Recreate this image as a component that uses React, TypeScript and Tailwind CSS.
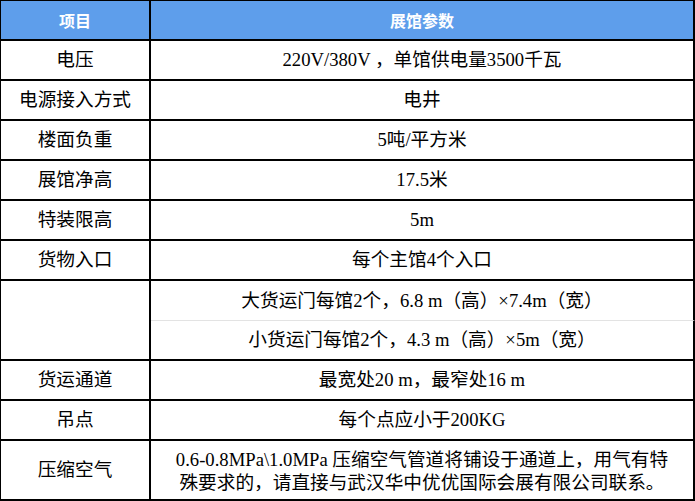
const rows: { label: string; value: string }[] = [
  { label: '电压', value: '220V/380V ，单馆供电量3500千瓦' },
  { label: '电源接入方式', value: '电井' },
  { label: '楼面负重', value: '5吨/平方米' },
  { label: '展馆净高', value: '17.5米' },
  { label: '特装限高', value: '5m' },
  { label: '货物入口', value: '每个主馆4个入口' },
]

const tail: { label: string; value: string }[] = [
  { label: '货运通道', value: '最宽处20 m，最窄处16 m' },
  { label: '吊点', value: '每个点应小于200KG' },
]

const cell =
  'flex items-center justify-center border-r-2 border-b-2 border-black text-center'

export default function App() {
  return (
    <div className="w-[695px] h-[501px] bg-white overflow-hidden">
      <div className="w-[695px] border-t border-l border-black grid grid-cols-[150px_544px] font-['Liberation_Serif','Noto_Sans_CJK_SC',serif] text-[18.67px] text-black">
        {/* header */}
        <div className={`${cell} h-[40px] bg-[#5e9eeb] text-white font-bold text-[16px] font-['Noto_Sans_CJK_SC',sans-serif]`}>
          项目
        </div>
        <div className={`${cell} h-[40px] bg-[#5e9eeb] text-white font-bold text-[16px] font-['Noto_Sans_CJK_SC',sans-serif]`}>
          展馆参数
        </div>

        {rows.map((r) => (
          <div key={r.label} className="contents">
            <div className={`${cell} h-[40px]`}>{r.label}</div>
            <div className={`${cell} h-[40px]`}>{r.value}</div>
          </div>
        ))}

        {/* merged row */}
        <div className={`${cell} row-span-2`}></div>
        <div className="flex items-center justify-center h-[40px] border-r-2 border-b border-r-black border-b-[#e3e3e3]">
          大货运门每馆2个，6.8 m（高）×7.4m（宽）
        </div>
        <div className={`${cell} h-[40px]`}>小货运门每馆2个，4.3 m（高）×5m（宽）</div>

        {tail.map((r) => (
          <div key={r.label} className="contents">
            <div className={`${cell} h-[40px]`}>{r.label}</div>
            <div className={`${cell} h-[40px]`}>{r.value}</div>
          </div>
        ))}

        <div className={`${cell} h-[60px]`}>压缩空气</div>
        <div className={`${cell} h-[60px] px-[8px] leading-[23px] pt-[2px]`}>
          <p>
            0.6-0.8MPa\1.0MPa 压缩空气管道将铺设于通道上，用气有特
            <br />
            殊要求的，请直接与武汉华中优优国际会展有限公司联系。
          </p>
        </div>
      </div>
    </div>
  )
}
